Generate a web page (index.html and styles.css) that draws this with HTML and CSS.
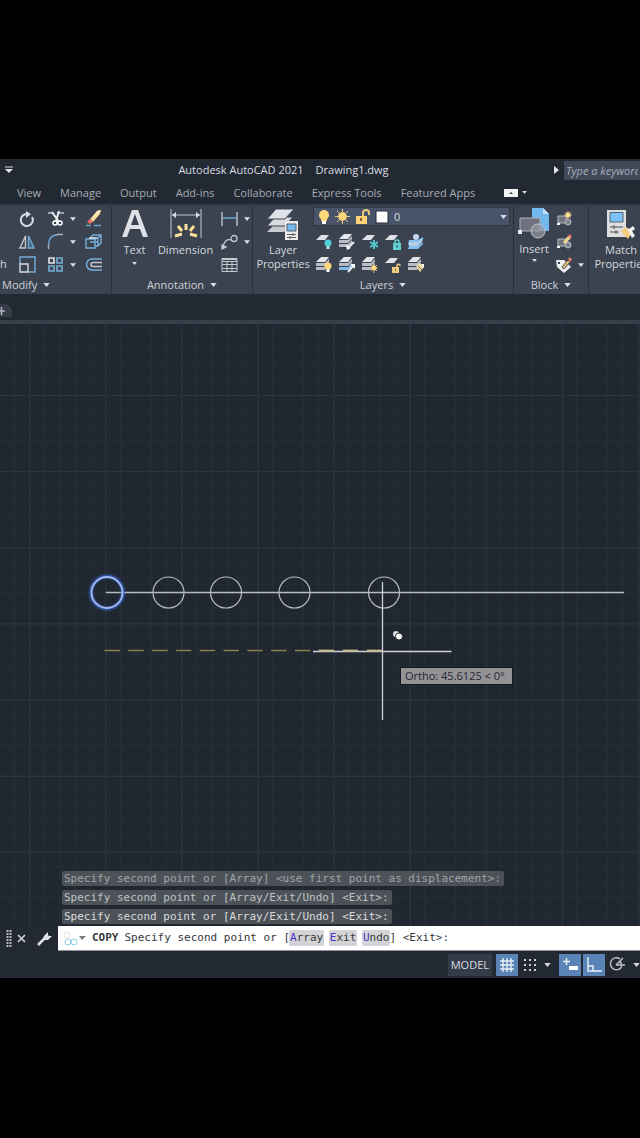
FILE: index.html
```html
<!DOCTYPE html>
<html lang="en">
<head>
<meta charset="utf-8">
<meta name="viewport" content="width=device-width, initial-scale=1">
<title>Autodesk AutoCAD 2021 - Drawing1.dwg</title>
<link rel="stylesheet" href="styles.css">
</head>
<body>
<svg class="defs" aria-hidden="true">
  <symbol id="down" viewBox="0 0 8 5"><path d="M0 0H8L4 5Z" fill="#d8dce3"/></symbol>
  <symbol id="sheet" viewBox="0 0 16 16"><path d="M5 1H13L9 6H0Z" fill="#dfe1e6"/></symbol>
  <symbol id="stack" viewBox="0 0 16 16"><path d="M5 0H13L9 5H0Z" fill="#e4e6ea"/><path d="M0 6H9L13 2V5L9 9H0ZM0 10H9L13 6V9L9 13H0Z" fill="#b9bcc4"/></symbol>
  <symbol id="stackblue" viewBox="0 0 16 16"><path d="M5 0H13L9 5H0Z" fill="#e4e6ea"/><path d="M0 6H9L13 2V5L9 9H0Z" fill="#b9bcc4"/><path d="M0 10H9L13 6V9L9 13H0Z" fill="#7ebff0"/></symbol>
  <symbol id="insertblock" viewBox="0 0 16 16"><path d="M2 5H11V12H2Z" fill="#70747f" stroke="#b9bcc3"/><circle cx="12" cy="11" r="3" fill="#81858f" stroke="#b9bcc3"/><path d="M1 12H4V14H1Z" fill="#fff"/></symbol>
</svg>
<div class="app">
  <header class="titlebar">
    <button class="plain quick" aria-label="Customize quick access"><svg width="8" height="8"><path d="M0 1H8" stroke="#d9dce2" stroke-width="1"/><path d="M0 3H8L4 7Z" fill="#e3e5ea"/></svg></button>
    <h1 class="title"><span>Autodesk AutoCAD 2021</span><span>Drawing1.dwg</span></h1>
    <button class="plain expand" aria-label="Expand search"><svg width="5" height="8"><path d="M0 0V8L5 4Z" fill="#e3e5ea"/></svg></button>
    <input class="search" type="text" aria-label="Search" placeholder="Type a keyword or phrase">
  </header>
  <nav class="menu">
    <a href="#view">View</a><a href="#manage">Manage</a><a href="#output">Output</a><a href="#addins">Add-ins</a><a href="#collaborate">Collaborate</a><a href="#express">Express Tools</a><a href="#featured">Featured Apps</a>
    <button class="plain toggle" aria-label="Minimize ribbon"><svg width="14" height="8"><path d="M0 0H14V8H0Z" fill="#f3f3f5"/><path d="M5 5L7 3L9 5Z" fill="#3d434f"/></svg><svg width="5" height="3"><use href="#down"/></svg></button>
  </nav>

  <section class="ribbon" aria-label="Ribbon">
    <div class="panel modify">
      <div class="tools">
        <span class="clipped">h</span>
        <div class="grid3">
          <button class="plain" aria-label="Rotate"><svg width="16" height="16" fill="none" stroke="#d9dce3" stroke-width="2"><path d="M8 3A6 6 0 1 0 13 6"/><path d="M7 0L12 3L7 7Z" fill="#d9dce3" stroke="none"/></svg></button>
          <button class="plain pair" aria-label="Trim"><svg width="17" height="17" fill="none"><path d="M1 3H5M10 3H17" stroke="#9da5b1" stroke-width="2"/><path d="M5 2L12 12M12 1L9 11" stroke="#eceef1" stroke-width="2"/><circle cx="8" cy="13" r="2" stroke="#fff" stroke-width="1.5"/><circle cx="13" cy="13" r="2" stroke="#fff" stroke-width="1.5"/></svg><svg width="6" height="4"><use href="#down"/></svg></button>
          <button class="plain" aria-label="Erase"><svg width="17" height="17"><path d="M5 9L12 1L16 0L15 4L8 12Z" fill="#f4d49b"/><path d="M12 1L16 0L8 9Z" fill="#fff0cb"/><path d="M2 12L5 9L8 12L5 14Z" fill="#e86c63"/><path d="M1 15.500H6M9 15.500H16" stroke="#70a8d2" stroke-width="1.500"/></svg></button>
          <button class="plain" aria-label="Mirror"><svg width="16" height="16" fill="none"><path d="M6.500 2V14H1Z" stroke="#c2c6cd" stroke-width="1.400"/><path d="M9.500 2V14H15Z" fill="#3d6381" stroke="#72add8" stroke-width="1.400"/></svg></button>
          <button class="plain pair" aria-label="Fillet"><svg width="17" height="17" fill="none" stroke-width="1.400"><path d="M1.500 14V12C1.500 6 5 2 11 1.500" stroke="#70a9d5"/><path d="M1.500 12V16M10 1.500H16" stroke="#a9b3bf"/></svg><svg width="6" height="4"><use href="#down"/></svg></button>
          <button class="plain" aria-label="Explode"><svg width="17" height="17" fill="none" stroke="#75afd8" stroke-width="1.400"><path d="M1 6H10V15H1Z"/><path d="M5 9H13M5 5L8 2H16V10L13 13H10M5 5H13V13M13 5L16 2"/><path d="M4 5H12" stroke="#d3dae1" stroke-width="1.500"/></svg></button>
          <button class="plain" aria-label="Scale"><svg width="17" height="17" fill="none" stroke-width="1.400"><path d="M1 8V1H16V16H9" stroke="#72add8"/><path d="M1 8H9V16H1Z" stroke="#d8dbe1"/></svg></button>
          <button class="plain pair" aria-label="Array"><svg width="17" height="17" fill="none" stroke="#75afd8" stroke-width="1.600"><path d="M10 2H15V7H10ZM2 10H7V15H2ZM10 10H15V15H10Z"/><path d="M2 2H7V7H2Z" stroke="#e3e5e9"/></svg><svg width="6" height="4"><use href="#down"/></svg></button>
          <button class="plain" aria-label="Offset"><svg width="17" height="16" fill="none" stroke-width="1.500"><path d="M17 2H7A5.500 5.500 0 0 0 7 13H17" stroke="#75afd8"/><path d="M17 5.500H8A2 2 0 0 0 8 9.500H17" stroke="#c8cbd1"/></svg></button>
        </div>
      </div>
      <button class="plain caption">Modify <svg width="7" height="4"><use href="#down"/></svg></button>
    </div>

    <div class="panel annotation">
      <div class="tools">
        <button class="plain big text"><svg width="26" height="29"><path d="M0 28L10 1H16L26 28H21L18 20H8L5 28ZM9 16H17L13 5Z" fill="#dfe1e6"/></svg><span>Text</span><svg width="5" height="3"><use href="#down"/></svg></button>
        <button class="plain big"><svg width="32" height="29" fill="none"><path d="M1 0V29M31 0V29M2 6H30" stroke="#c6cad1"/><path d="M2 6L6 3V9ZM30 6L26 3V9Z" fill="#d7dae0"/><path d="M16 15V21M8 17L12 22M24 17L20 22M5 27L12 25M27 27L20 25" stroke="#ffe09b" stroke-width="3"/></svg><span>Dimension</span></button>
        <div class="column">
          <button class="plain pair" aria-label="Linear dimension"><svg width="17" height="16" fill="none" stroke-width="1.400"><path d="M1 1V15M16 1V15" stroke="#bfc4cc"/><path d="M2 7H15" stroke="#75afd8"/></svg><svg width="6" height="4"><use href="#down"/></svg></button>
          <button class="plain pair" aria-label="Leader"><svg width="17" height="16" fill="none" stroke="#c5c9d0" stroke-width="1.300"><path d="M2 13Q4 4 10 6"/><circle cx="13" cy="4.500" r="3"/><path d="M1 11L5 13L1 15Z" fill="#dde0e5"/></svg><svg width="6" height="4"><use href="#down"/></svg></button>
          <button class="plain" aria-label="Table"><svg width="17" height="16" fill="none" stroke="#c5c9d0"><path d="M1 1.500H16V14.500H1ZM1 4.500H16M1 7.500H16M1 11.500H16M6 4V14M11 4V14"/><path d="M1 2H16" stroke-width="2"/></svg></button>
        </div>
      </div>
      <button class="plain caption">Annotation <svg width="7" height="4"><use href="#down"/></svg></button>
    </div>

    <div class="panel layers">
      <div class="tools">
        <button class="plain big layerprops"><svg width="33" height="34"><path d="M8 16H24L17 24H0Z" fill="#c8cad0"/><path d="M8 9H26L18 18H0Z" fill="#d8dae0" stroke="#3c4452"/><path d="M9 1H27L18 11H0Z" fill="#e2e3e8" stroke="#3c4452"/><path d="M18 13H31V32H18Z" fill="#eeeae5"/><path d="M20 16H29V23H20Z" fill="#72b7ed" stroke="#536071"/><path d="M20 26.500H29M20 29.500H29M26 25V28M23 28V31" stroke="#555d67"/></svg><span>Layer<br>Properties</span></button>
        <div class="layergrid">
          <div class="combo">
            <svg width="12" height="16"><circle cx="6" cy="6" r="5" fill="#ffd878"/><path d="M3 8H9V12H3Z" fill="#ffd878"/><path d="M4 12H8V15H4Z" fill="#fff"/></svg>
            <svg width="15" height="15" stroke="#e9c77e"><path d="M7.500 0V15M0 7.500H15M2 2L13 13M13 2L2 13"/><circle cx="7.500" cy="7.500" r="4" fill="#ffd67a"/></svg>
            <svg width="15" height="16"><path d="M8 7V4A3 3 0 0 1 14 4V6" stroke="#e8c47a" stroke-width="2" fill="none"/><path d="M1 7H12V15H1Z" fill="#ffd377"/><path d="M5 9H7V12H5Z" fill="#725e39"/></svg>
            <svg width="14" height="14"><path d="M1 1H13V13H1Z" fill="#fff" stroke="#222a35"/></svg>
            <select aria-label="Current layer"><option>0</option></select>
            <svg width="7" height="4"><use href="#down"/></svg>
          </div>
          <div class="layerrow">
            <button class="plain" aria-label="Layer off"><svg width="16" height="16"><use href="#sheet"/><circle cx="12" cy="9" r="3.500" fill="#56cfd2"/><path d="M10.500 12H13.500V15H10.500Z" fill="#b6eff0"/></svg></button>
            <button class="plain" aria-label="Isolate"><svg width="16" height="16"><use href="#stack"/><path d="M9 14L15 8" stroke="#eef0f3" stroke-width="2"/><path d="M7 11L12 14L8 16Z" fill="#fff"/></svg></button>
            <button class="plain" aria-label="Freeze"><svg width="16" height="16"><use href="#sheet"/><path d="M12 6V15M8 8L16 13M16 8L8 13" stroke="#50c5c7" stroke-width="2"/></svg></button>
            <button class="plain" aria-label="Lock"><svg width="16" height="16"><use href="#sheet"/><path d="M10 10V8A2 2 0 0 1 14 8V10" fill="none" stroke="#63cdd1" stroke-width="1.500"/><path d="M8 9H16V16H8Z" fill="#63cdd1"/><path d="M11.500 11H12.500V14H11.500Z" fill="#2e6268"/></svg></button>
            <button class="plain" aria-label="Make current"><svg width="16" height="16"><path d="M1 6H10L15 3V6L10 11H0ZM1 12H10L15 8V10L10 15H0Z" fill="#81c1f2"/><path d="M1 8H10L14 5V8L10 12H1Z" fill="#b3cee4"/><circle cx="8" cy="3" r="3" fill="#c6d8f1"/></svg></button>
          </div>
          <div class="layerrow">
            <button class="plain" aria-label="Turn all on"><svg width="16" height="16"><use href="#stack"/><circle cx="12" cy="9" r="3.500" fill="#ffd576"/><path d="M10.500 12H13.500V15H10.500Z" fill="#fff"/></svg></button>
            <button class="plain" aria-label="Unisolate"><svg width="16" height="16"><use href="#stackblue"/><path d="M9 15L14 9" stroke="#eef0f3" stroke-width="2"/><path d="M11 7H16V12Z" fill="#fff"/></svg></button>
            <button class="plain" aria-label="Thaw all"><svg width="16" height="16"><use href="#stack"/><path d="M12 6V16M7 11H16M9 8L15 14M15 8L9 14" stroke="#dfbb70"/><circle cx="12" cy="11" r="2.500" fill="#ffda80"/></svg></button>
            <button class="plain" aria-label="Unlock"><svg width="16" height="16"><use href="#sheet"/><path d="M12 10V8A2 2 0 0 1 15 8V9" fill="none" stroke="#e8c77c" stroke-width="1.500"/><path d="M7 10H14V16H7Z" fill="#f2cd7e"/><path d="M10 12H11V14H10Z" fill="#725e39"/></svg></button>
            <button class="plain" aria-label="Match layer"><svg width="16" height="16"><use href="#stack"/><path d="M8 9L12 6L16 10L12 15Z" fill="#f4dfaa"/><path d="M13 7H16V11Z" fill="#fff"/><path d="M10 9L14 13" stroke="#76664e"/></svg></button>
          </div>
        </div>
      </div>
      <button class="plain caption">Layers <svg width="7" height="4"><use href="#down"/></svg></button>
    </div>

    <div class="panel block">
      <div class="tools">
        <button class="plain big insert"><svg width="32" height="31"><path d="M14 0H25L31 6V23H14Z" fill="#71b9ed"/><path d="M25 0V6H31Z" fill="#c4e3f8"/><path d="M2 10H22V23H2Z" fill="#70737f" stroke="#aeb1ba"/><circle cx="20" cy="23" r="7" fill="#9599a2" fill-opacity=".7" stroke="#c0c3ca"/><path d="M0 22H4V26H0Z" fill="#e8ebef"/></svg><span>Insert</span><svg width="5" height="3"><use href="#down"/></svg></button>
        <div class="column">
          <button class="plain" aria-label="Create block"><svg width="16" height="16"><use href="#insertblock"/><path d="M12 0V8M8 4H16M9 1L15 7M15 1L9 7" stroke="#c7ad75"/><circle cx="12" cy="4" r="2.500" fill="#ffe194"/></svg></button>
          <button class="plain" aria-label="Edit block"><svg width="16" height="16"><use href="#insertblock"/><path d="M7 8L12 2L15 4L9 10Z" fill="#f3d593"/><path d="M12 2L14 0L16 3L14 5Z" fill="#e48172"/></svg></button>
          <button class="plain pair" aria-label="Edit attributes"><svg width="16" height="16"><path d="M0 3H8L15 10L8 16L1 10Z" fill="#eee"/><path d="M2 5H4V7H2Z" fill="#39414e"/><path d="M6 10L12 3L14 5L8 12Z" fill="#e8c375" stroke="#474751"/><path d="M12 2L14 0L16 3L14 5Z" fill="#e48172"/></svg><svg width="6" height="4"><use href="#down"/></svg></button>
        </div>
      </div>
      <button class="plain caption">Block <svg width="7" height="4"><use href="#down"/></svg></button>
    </div>

    <div class="panel properties">
      <button class="plain big match"><svg width="30" height="32"><path d="M1 1H20V28H1Z" fill="#dedede"/><path d="M4 3.500H17V13H4Z" fill="#7bc2f6" stroke="#526171"/><path d="M4 18H17M4 23H13M8 16V20M10 21V25" stroke="#474c55"/><path d="M15 22L20 18L25 25L22 30Z" fill="#f4cb7a"/><path d="M20 18L23 20L27 17L29 20L26 22L29 27L26 29Z" fill="#f4f4f2"/></svg><span>Match<br>Properties</span></button>
    </div>
  </section>

  <div class="filetabs"><button class="newtab" aria-label="New drawing"><svg width="6" height="8"><path d="M1.500 0V8M0 4H5" stroke="#b3b7bf" stroke-width="1.500"/></svg></button></div>

  <main class="canvas">
    <svg class="drawing" role="img" aria-label="Line with circles being copied">
      <defs>
        <pattern id="minor" x="29" y="71" width="15.2" height="15.2" patternUnits="userSpaceOnUse"><path d="M.5 0V15.2M0 .5H15.2" stroke="#252e38" stroke-width="1"/></pattern>
        <pattern id="major" x="29" y="71" width="76.2" height="76.2" patternUnits="userSpaceOnUse"><path d="M.5 0V76.2M0 .5H76.2" stroke="#2a353e" stroke-width="1"/></pattern>
        <filter id="glow" x="-30%" y="-30%" width="160%" height="160%"><feGaussianBlur stdDeviation="1"/></filter>
      </defs>
      <rect width="100%" height="100%" fill="url(#minor)"/>
      <rect width="100%" height="100%" fill="url(#major)"/>
      <path d="M106 268.5H624" stroke="#b6bbc1" stroke-width="1.5"/>
      <g fill="none" stroke="#b7bbc2" stroke-width="1.2"><circle cx="168.500" cy="268.500" r="15.500"/><circle cx="226" cy="268.500" r="15.500"/><circle cx="294.500" cy="268.500" r="15.500"/><circle cx="384" cy="268.500" r="15.500"/></g>
      <circle cx="107" cy="268.500" r="16" fill="none" stroke="#3868da" stroke-width="3" filter="url(#glow)"/>
      <circle cx="107" cy="268.500" r="15.500" fill="none" stroke="#a5b8ec" stroke-width="1.800"/>
      <path d="M313 327.500H451.500M382.500 258V396" stroke="#d1d3d6" stroke-width="1.300"/>
      <path d="M104.500 326.500H382" stroke="#8b7d4e" stroke-width="1.700" stroke-dasharray="15.500 8.300"/>
      <path d="M319 326.500H334M343 326.500H358M367 326.500H382" stroke="#c7bd8f" stroke-width="1.500"/>
      <circle cx="396" cy="310" r="3" fill="#dce0e3"/><circle cx="399" cy="312.500" r="3.500" fill="#fff" stroke="#242b35"/>
    </svg>
    <output class="tooltip">Ortho: 45.6125 &lt; 0°</output>
    <div class="history"><p class="old">Specify second point or [Array] &lt;use first point as displacement&gt;:</p><p>Specify second point or [Array/Exit/Undo] &lt;Exit&gt;:</p><p class="recent">Specify second point or [Array/Exit/Undo] &lt;Exit&gt;:</p></div>
  </main>

  <div class="command">
    <svg class="grip" width="6" height="17"><path d="M1.500 0V17M4.500 0V17" stroke="#b6bac2" stroke-width="2" stroke-dasharray="2 1"/></svg>
    <button class="plain" aria-label="Close"><svg width="9" height="9"><path d="M1 1L8 8M8 1L1 8" stroke="#d7dae0" stroke-width="1.500"/></svg></button>
    <button class="plain wrench" aria-label="Customize"><svg width="15" height="15"><path d="M1 14L8 7" stroke="#dfe1e6" stroke-width="2.500"/><path d="M7 5L11 1V4L12 5H15L11 9H8L6 7Z" fill="#dfe1e6"/></svg></button>
    <div class="prompt">
      <button class="plain copy" aria-label="Recent commands"><svg width="14" height="15" fill="none"><circle cx="3" cy="4" r="3" stroke="#e5e5e5"/><circle cx="4" cy="11" r="3" stroke="#8acce3"/><circle cx="10" cy="11" r="3" stroke="#8acce3"/></svg><svg width="7" height="4"><path d="M0 0H7L3 4Z" fill="#777b80"/></svg></button>
      <b>COPY</b><span>Specify second point or [<button class="key"><i>A</i>rray</button> <button class="key"><i>E</i>xit</button> <button class="key"><i>U</i>ndo</button>] &lt;Exit&gt;:</span>
    </div>
  </div>

  <footer class="status">
    <button class="plain model">MODEL</button>
    <button class="plain active" aria-label="Grid"><svg width="16" height="16"><path d="M4 1V15M8 1V15M12 1V15M1 4H15M1 8H15M1 12H15" stroke="#e5eef7" stroke-width="1.400"/></svg></button>
    <button class="plain snap" aria-label="Snap"><svg width="14" height="14"><path d="M1 2H13M1 7H13M1 12H13" stroke="#c9ccd2" stroke-width="2" stroke-dasharray="2 3"/></svg></button>
    <button class="plain snaparrow" aria-label="Snap options"><svg width="7" height="4"><use href="#down"/></svg></button>
    <button class="plain active" aria-label="Dynamic input"><svg width="17" height="17"><path d="M4.500 2V9M1 5.500H8" stroke="#e9f0f8" stroke-width="1.500"/><path d="M7 10H16V14H7Z" fill="#fff"/></svg></button>
    <button class="plain active" aria-label="Ortho"><svg width="18" height="17" fill="none" stroke="#e8f0f7" stroke-width="1.400"><path d="M3 1V15H17M3 10H8V15"/></svg></button>
    <button class="plain polar" aria-label="Polar tracking"><svg width="17" height="17" fill="none" stroke="#bfc3ca" stroke-width="1.400"><path d="M11 3A6 6 0 1 0 13 10M7 9L14 2M7 9H16M11 5Q13 7 12 10"/></svg></button>
    <button class="plain" aria-label="Polar options"><svg width="7" height="4"><use href="#down"/></svg></button>
  </footer>
</div>
</body>
</html>
```
FILE: styles.css
```css
* { box-sizing: border-box; }
body {
  margin: 0;
  min-height: 100vh;
  padding: 159px 0 160px;
  display: flex;
  background: #000;
  color: #d5d8de;
  font: 11px/14px "Open Sans", "Noto Sans", sans-serif;
}
svg { display: block; flex-shrink: 0; }
button, input, select { font: inherit; color: inherit; }
.defs { position: absolute; width: 0; height: 0; }
.plain {
  display: flex;
  align-items: center;
  padding: 0;
  border: 0;
  background: none;
  white-space: nowrap;
}
.app {
  flex: 1;
  min-width: 0;
  display: flex;
  flex-direction: column;
  overflow: hidden;
  background: #222933;
}
.titlebar { display: flex; align-items: center; height: 22px; padding-left: 5px; }
.title {
  flex: 1;
  display: flex;
  justify-content: center;
  gap: 12px;
  margin: 0;
  color: #d9dce1;
  font-size: 11px;
  font-weight: 400;
}
.expand { margin-right: 5px; }
.search {
  width: 76px;
  height: 19px;
  padding: 0 2px;
  border: 0;
  background: #414858;
  font-style: italic;
}
.search::placeholder { color: #a9afbb; opacity: 1; }
.menu { display: flex; align-items: center; gap: 19px; height: 23px; padding-left: 17px; color: #a7abb3; }
.menu a { color: inherit; text-decoration: none; white-space: nowrap; }
.toggle { gap: 4px; margin-left: 10px; }

.ribbon {
  display: flex;
  height: 90px;
  background: #3b4350;
  border-top: 2px solid #343c4a;
}
.panel {
  display: flex;
  flex-direction: column;
  flex-shrink: 0;
  overflow: hidden;
  border-right: 1px solid #29303b;
}
.tools { display: flex; height: 71px; padding-top: 1px; }
.caption { align-self: center; gap: 6px; height: 16px; color: #cdd0d7; }
.modify { width: 112px; }
.modify .caption { align-self: flex-start; margin-left: 2px; }
.clipped { width: 6px; align-self: flex-end; padding-bottom: 6px; }
.grid3 { display: grid; grid-template-columns: 28px 38px 20px; grid-template-rows: repeat(3, 23px); margin-left: 13px; }
.pair { gap: 6px; }
.big { flex-direction: column; justify-content: flex-start; gap: 4px; padding-top: 1px; text-align: center; }
.annotation { width: 141px; }
.annotation .big { gap: 5px; padding-top: 2px; }
.annotation .big:not(.text) { width: 57px; }
.text { width: 45px; }
.column { display: grid; grid-template-rows: repeat(3, 23px); margin-left: 7px; }
.layers { flex: 1 0 261px; }
.layers .tools { gap: 5px; padding-left: 5px; padding-right: 3px; }
.layerprops { width: 50px; gap: 1px; }
.layergrid { flex: 1; display: grid; grid-template-rows: 23px 23px 23px; }
.combo {
  display: flex;
  align-items: center;
  gap: 5px;
  height: 19px;
  padding: 0 2px 0 4px;
  border: 1px solid #303846;
  background: #49546a;
}
.combo select {
  flex: 1;
  min-width: 0;
  padding: 0;
  border: 0;
  appearance: none;
  background: transparent;
}
.layerrow { display: flex; gap: 7px; padding-left: 3px; }
.block { width: 75px; }
.block .tools { padding-left: 4px; }
.block .big { gap: 3px; }
.block .column { margin-left: 6px; }
.properties { width: 64px; border: 0; }
.match { width: 64px; gap: 2px; padding-top: 3px; }

.filetabs { height: 30px; padding-top: 10px; border-bottom: 4px solid #363e4a; }
.newtab {
  display: flex;
  align-items: center;
  width: 12px;
  height: 13px;
  padding: 0;
  border: 0;
  border-radius: 0 8px 0 0;
  background: #363d49;
}
.canvas { position: relative; flex: 1; background: #202730; overflow: hidden; }
.drawing { position: absolute; inset: 0; width: 100%; height: 100%; }
.tooltip {
  position: absolute;
  left: 400px;
  top: 343px;
  padding: 1px 7px 1px 4px;
  border: 1px solid #161a20;
  background: #929297;
  color: #26282d;
  white-space: nowrap;
}
.history {
  position: absolute;
  left: 62px;
  bottom: 2px;
  display: flex;
  flex-direction: column;
  align-items: flex-start;
  gap: 4px;
  font: 11px/15px "DejaVu Sans Mono", monospace;
}
.history p { margin: 0; padding: 0 3px 0 2px; border-radius: 2px; background: #4d5258; color: #bfc2c6; white-space: nowrap; }
.history .old { color: #a0a4a9; }
.history .recent { color: #d9dbde; }
.command { display: flex; align-items: center; height: 25px; background: #222933; }
.grip { margin: 0 5px 0 6px; }
.wrench { margin: 0 6px 0 11px; }
.prompt {
  flex: 1;
  display: flex;
  align-items: center;
  gap: 6px;
  height: 25px;
  padding-left: 6px;
  background: #fff;
  color: #35373b;
  border-bottom: 1px solid #8d9299;
  font: 11px/16px "DejaVu Sans Mono", monospace;
  white-space: nowrap;
}
.copy { gap: 1px; }
.key { padding: 0 1px; border: 0; border-radius: 2px; margin: 0 -1px; background: #d4d4d7; }
.key i { color: #4a32c4; font-style: normal; }
.status { display: flex; align-items: center; justify-content: flex-end; height: 27px; }
.model { height: 22px; padding: 0 3px; margin-right: 4px; background: #343c49; color: #d8dbe1; }
.active { justify-content: center; width: 22px; height: 22px; background: #5984b5; }
.active + .active { margin-left: 2px; }
.snap { margin: 0 7px 0 5px; }
.snaparrow { margin-right: 8px; }
.polar { margin: 0 7px 0 4px; }
```
